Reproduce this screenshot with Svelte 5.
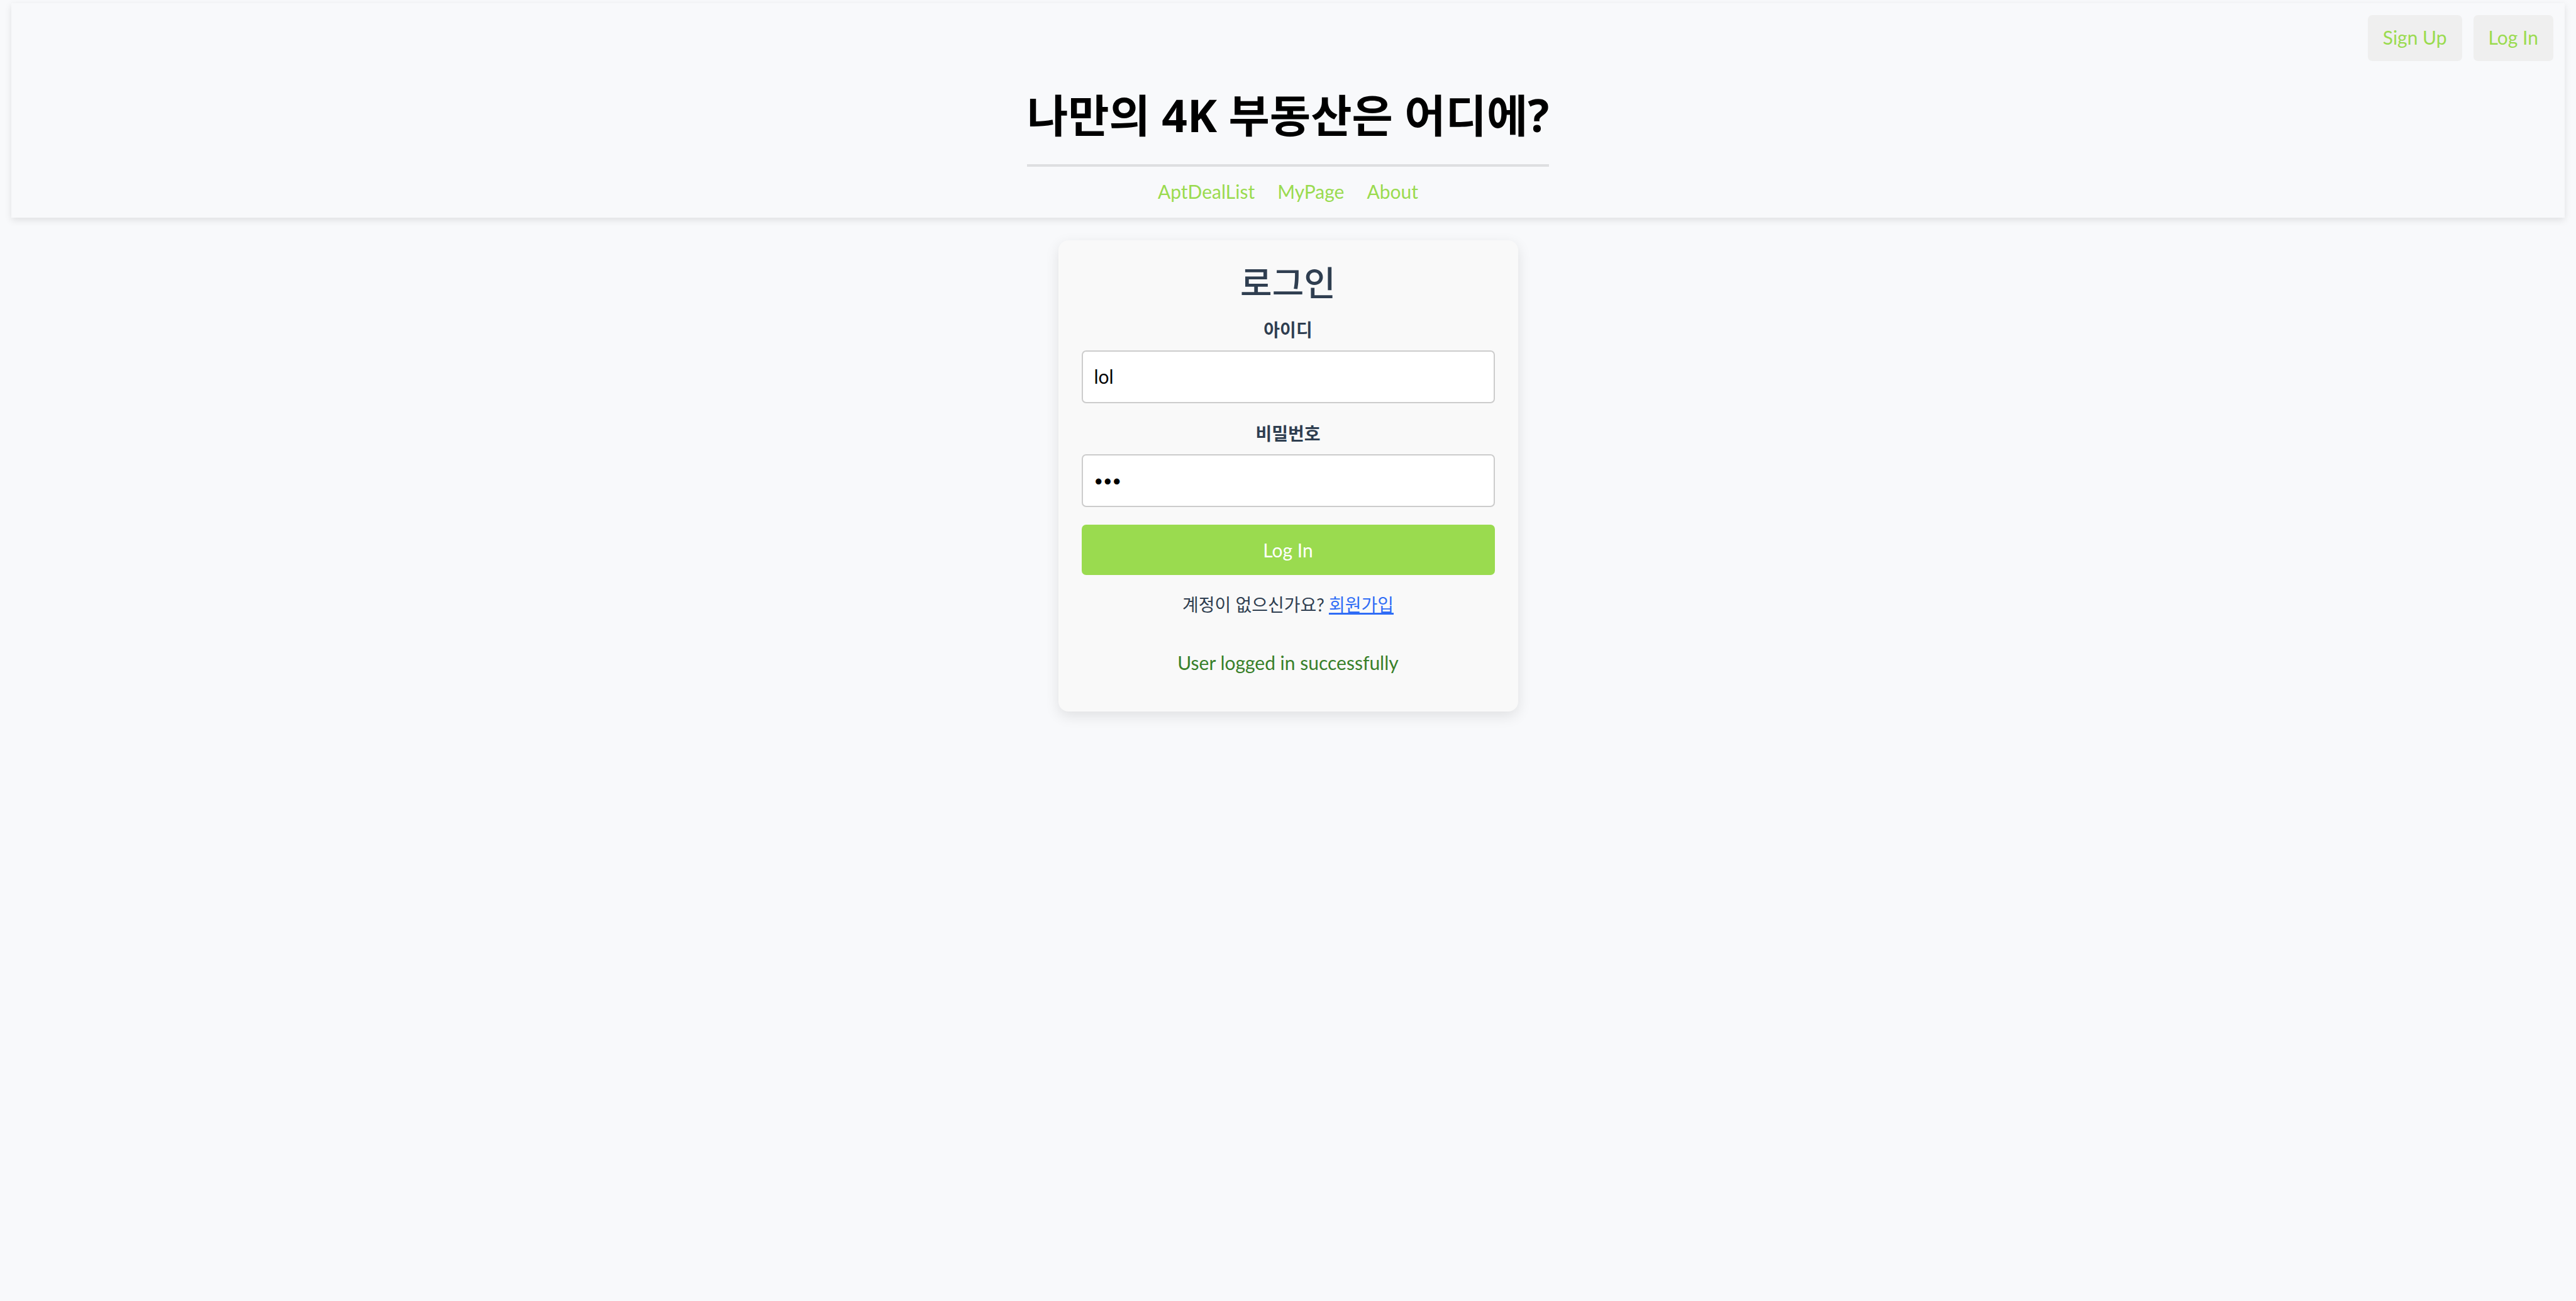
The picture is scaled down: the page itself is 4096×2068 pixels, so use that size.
<script>
  let userId = $state('lol');
  let password = $state('lol');
  let message = $state('User logged in successfully');

  const links = ['AptDealList', 'MyPage', 'About'];

  function submit(event) {
    event.preventDefault();
    message = 'User logged in successfully';
  }
</script>

<div class="page">
  <header class="site-header">
    <div class="auth">
      <button type="button">Sign Up</button>
      <button type="button">Log In</button>
    </div>
    <h1>나만의 4K 부동산은 어디에?</h1>
    <nav>
      {#each links as link}
        <a href={'#' + link}>{link}</a>
      {/each}
    </nav>
  </header>

  <main class="card">
    <h2>로그인</h2>
    <form onsubmit={submit}>
      <label for="user-id">아이디</label>
      <input id="user-id" type="text" bind:value={userId} />
      <label for="password">비밀번호</label>
      <input id="password" type="password" bind:value={password} />
      <button class="submit" type="submit">Log In</button>
    </form>
    <p class="signup">계정이 없으신가요? <a href="#signup">회원가입</a></p>
    <p class="message" role="status">{message}</p>
  </main>
</div>

<style>
  :global(body) {
    margin: 0;
    background: #f8f9fb;
  }

  .page {
    display: flow-root;
    box-sizing: border-box;
    min-height: 100vh;
    background: #f8f9fb;
    color: #2f3e50;
    font-family: Lato, 'Noto Sans CJK KR', sans-serif;
    font-size: 30px;
    line-height: 40px;
  }

  h1,
  h2,
  p {
    margin: 0;
  }

  button,
  input {
    box-sizing: border-box;
    font: inherit;
  }

  .site-header {
    display: flex;
    flex-direction: column;
    align-items: center;
    margin: 5px 18px 0;
    padding: 19px 18px 22px;
    background: #f8f9fb;
    box-shadow: 0 4px 11px rgba(0, 0, 0, 0.1);
  }

  .auth {
    display: flex;
    align-self: flex-end;
    gap: 18px;
  }

  .auth button {
    padding: 15px 24px 18px;
    border: 0;
    border-radius: 7px;
    background: #efefef;
    color: #9adb4f;
  }

  h1 {
    margin-top: 36px;
    padding-bottom: 28px;
    border-bottom: 4px solid #dedfe1;
    color: #000;
    font-family: 'Noto Sans', 'Noto Sans CJK KR', sans-serif;
    font-size: 71px;
    font-weight: 700;
    line-height: 100px;
  }

  nav {
    display: flex;
    gap: 36px;
    margin-top: 19px;
  }

  nav a {
    color: #9adb4f;
    text-decoration: none;
  }

  .card {
    box-sizing: border-box;
    width: 100%;
    max-width: 731px;
    margin: 36px auto 0;
    padding: 34px 37px 58px;
    border-radius: 16px;
    background: #f9f9f9;
    box-shadow: 0 7px 22px rgba(0, 0, 0, 0.1);
    text-align: center;
  }

  h2 {
    margin-bottom: 22px;
    font-size: 55px;
    font-weight: 500;
    line-height: 66px;
  }

  form {
    display: flex;
    flex-direction: column;
  }

  label {
    margin-bottom: 13px;
    font-size: 28px;
    font-weight: 700;
  }

  input {
    width: 100%;
    height: 84px;
    margin-bottom: 28px;
    padding: 0 18px 2px;
    border: 2px solid #ccc;
    border-radius: 7px;
    background: #fff;
    color: #000;
  }

  input[type='password'] {
    font-size: 25px;
  }

  .submit {
    height: 80px;
    border: 0;
    border-radius: 7px;
    background: #9adb4f;
    color: #fff;
  }

  .signup {
    margin-top: 27px;
    font-size: 28px;
  }

  .signup a {
    color: #2f6cf6;
    text-decoration-thickness: 3px;
  }

  .message {
    margin-top: 52px;
    color: #38802a;
  }
</style>
